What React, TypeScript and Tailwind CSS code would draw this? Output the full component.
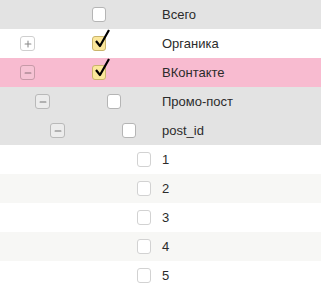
import { Minus, Plus } from "lucide-react";

type Row = {
  label: string;
  level: number;
  toggle?: "plus" | "minus";
  checked?: boolean;
  bg: string;
};

const ROWS: Row[] = [
  { label: "Всего", level: 0, bg: "bg-[#e3e3e3]" },
  { label: "Органика", level: 0, toggle: "plus", checked: true, bg: "bg-white" },
  { label: "ВКонтакте", level: 0, toggle: "minus", checked: true, bg: "bg-[#f8bbd0]" },
  { label: "Промо-пост", level: 1, toggle: "minus", bg: "bg-[#e3e3e3]" },
  { label: "post_id", level: 2, toggle: "minus", bg: "bg-[#e3e3e3]" },
  { label: "1", level: 3, bg: "bg-white" },
  { label: "2", level: 3, bg: "bg-[#f7f7f5]" },
  { label: "3", level: 3, bg: "bg-white" },
  { label: "4", level: 3, bg: "bg-[#f7f7f5]" },
  { label: "5", level: 3, bg: "bg-white" },
];

const INDENT = ["pl-0", "pl-[15px]", "pl-[30px]", "pl-[45px]"];

function Toggle({ kind, pink }: { kind: "plus" | "minus"; pink: boolean }) {
  const Icon = kind === "plus" ? Plus : Minus;
  return (
    <span
      className={`flex h-[15px] w-[15px] items-center justify-center rounded-[3px] border ${
        kind === "plus"
          ? "border-[#cfcfcf] bg-white text-[#888]"
          : pink
            ? "border-[#c79aa8] bg-[#f6c3d4] text-[#8a7078]"
            : "border-[#b9b9b9] bg-[#ececec] text-[#777]"
      }`}
    >
      <Icon size={10} strokeWidth={2.5} />
    </span>
  );
}

function Box({ checked, leaf }: { checked?: boolean; leaf: boolean }) {
  return (
    <span className="relative block h-[15px] w-[14px]">
      <span
        className={`block h-full w-full rounded-[3px] border ${
          checked
            ? "border-[#c9b46c] bg-[#fbe79b]"
            : leaf
              ? "border-[#d2d2d2] bg-white"
              : "border-[#b5b5b5] bg-white"
        }`}
      />
      {checked && (
        <svg
          className="absolute left-[2px] top-[-8px]"
          width="16"
          height="22"
          viewBox="0 0 16 22"
        >
          <path d="M2 13 L6 18 L15 2" fill="none" stroke="#000" strokeWidth="2.2" strokeLinejoin="round" />
        </svg>
      )}
    </span>
  );
}

export default function App() {
  return (
    <div className="w-[321px] h-[290px] overflow-hidden bg-white font-['Liberation_Sans',Arial,sans-serif] text-[13px] text-[#2b2b2b]">
      {ROWS.map((row) => (
        <div key={row.label} className={`grid h-[29px] grid-cols-[162px_1fr] items-center ${row.bg}`}>
          <div className={`flex items-center ${INDENT[row.level]}`}>
            <div className="w-[92px] pl-[20px]">
              {row.toggle && <Toggle kind={row.toggle} pink={row.bg === "bg-[#f8bbd0]"} />}
            </div>
            <Box checked={row.checked} leaf={row.level === 3} />
          </div>
          <span>{row.label}</span>
        </div>
      ))}
    </div>
  );
}
